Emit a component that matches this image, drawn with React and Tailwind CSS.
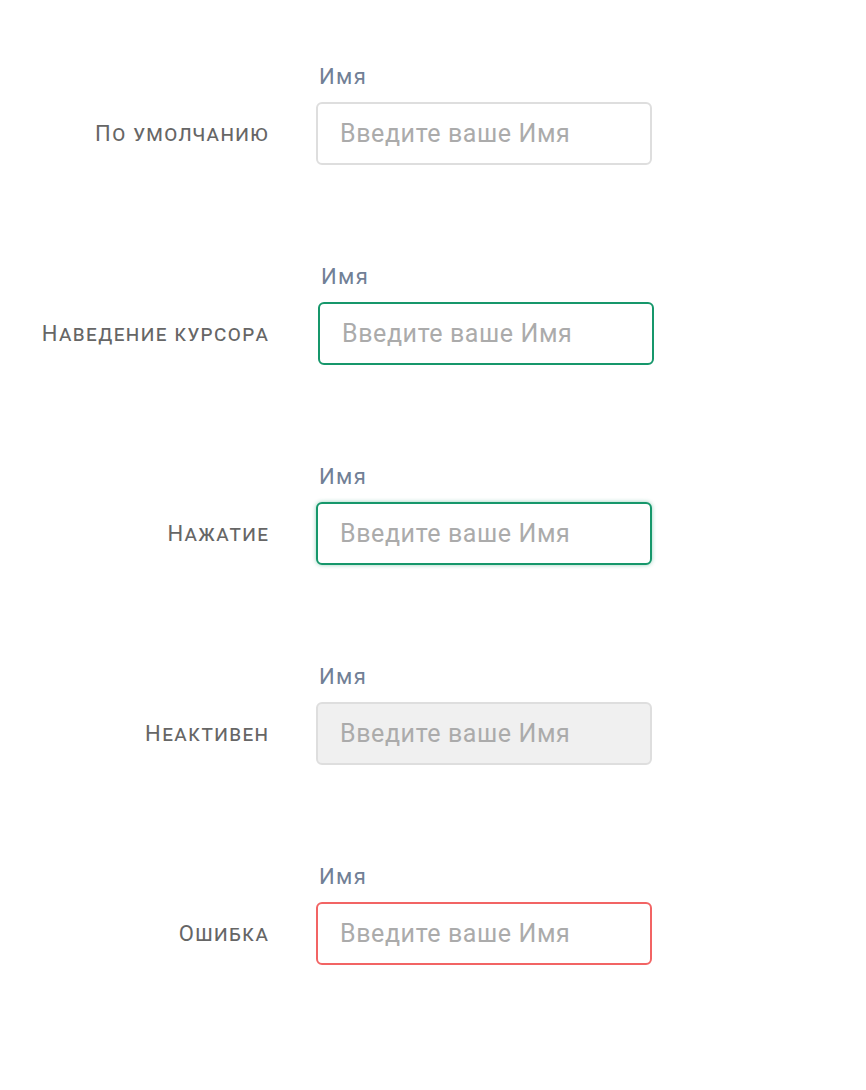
const rows = [
  { label: "По умолчанию", state: "default" },
  { label: "Наведение курсора", state: "hover" },
  { label: "Нажатие", state: "active" },
  { label: "Неактивен", state: "disabled" },
  { label: "Ошибка", state: "error" },
];

const inputStyles = {
  default: "border-[#dedede] bg-white",
  hover: "border-[#16976b] bg-white",
  active: "border-[#16976b] bg-white shadow-[0_0_4px_rgba(22,151,107,0.45)]",
  disabled: "border-[#dedede] bg-[#f0f0f0]",
  error: "border-[#f26464] bg-white",
};

const Field = ({ label, state }) => (
  <div className="flex items-end h-[200px]">
    {/* left caption */}
    <div className="w-[268px] h-[63px] flex items-center justify-end">
      <span className="text-[22px] tracking-[1.4px] -mr-[1.4px] text-[#666666] [font-variant:small-caps]">
        {label}
      </span>
    </div>

    <div className={state === "hover" ? "ml-[50px]" : "ml-[48px]"}>
      <div className="text-[22px] leading-[28px] tracking-[1.4px] text-[#718096] pl-[3px] mb-[11px]">
        Имя
      </div>
      <input
        type="text"
        disabled={state === "disabled"}
        placeholder="Введите ваше Имя"
        className={`block w-[336px] h-[63px] rounded-[6px] border-2 px-[22px] text-[25px] tracking-[0.6px] outline-none placeholder:text-[#ababab] ${inputStyles[state]}`}
      />
    </div>
  </div>
);

export default function App() {
  return (
    <div
      className="w-[866px] h-[1090px] bg-white -mt-[35px]"
      style={{ fontFamily: "Roboto, 'Noto Sans', sans-serif" }}
    >
      {rows.map((r) => (
        <Field key={r.state} label={r.label} state={r.state} />
      ))}
    </div>
  );
}
